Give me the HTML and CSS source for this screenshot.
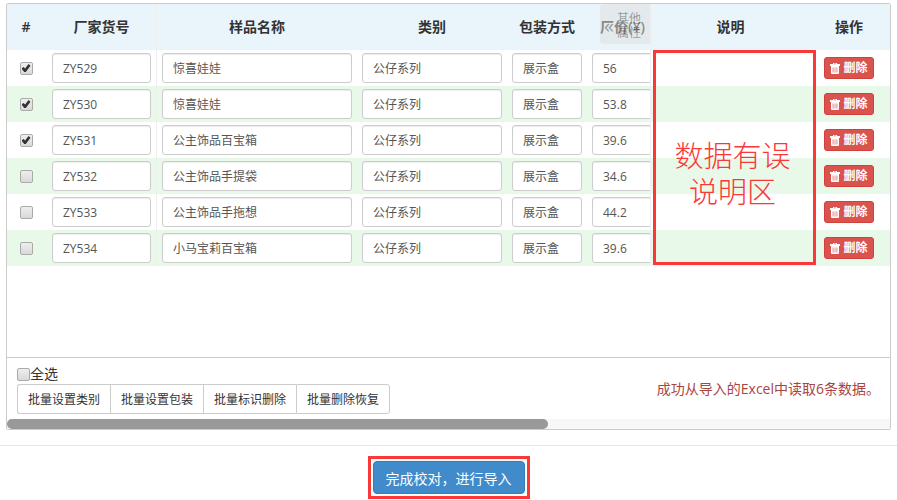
FILE: index.html
```html
<!DOCTYPE html>
<html lang="zh-CN">
<head>
  <meta charset="UTF-8" />
  <meta name="viewport" content="width=device-width, initial-scale=1.0"/>
  <title>数据导入校对</title>
  <link rel="stylesheet" href="styles.css">
</head>
<body>
  <svg class="symbols" width="0" height="0" aria-hidden="true">
    <symbol id="trash" viewBox="0 0 10 11">
      <path fill="#fff" fill-rule="evenodd" d="M3 0h4v1h3v2H0V1h3zM4 .6v.6h2V.6zM1 3h8v7a1 1 0 0 1-1 1H2a1 1 0 0 1-1-1zM2.7 4.4v5.2h.7V4.4zM4.7 4.4v5.2h.6V4.4zM6.6 4.4v5.2h.7V4.4z"/>
    </symbol>
  </svg>

  <div class="panel">
    <div class="grid-body">
      <table class="grid">
        <colgroup>
          <col class="col-check"><col class="col-code"><col class="col-name"><col class="col-type">
          <col class="col-pack"><col class="col-price"><col class="col-note"><col class="col-action">
        </colgroup>
        <thead>
          <tr>
            <th class="check">#</th>
            <th class="frozen">厂家货号</th>
            <th>样品名称</th>
            <th>类别</th>
            <th>包装方式</th>
            <th class="price">厂价(¥)<button class="more" type="button"><span class="arrow">«</span><span>其他<br>属性</span></button></th>
            <th class="note">说明</th>
            <th class="action">操作</th>
          </tr>
        </thead>
        <tbody>
          <tr>
            <td class="check"><input type="checkbox" aria-label="选择 ZY529" checked></td>
            <td class="frozen"><input class="field" aria-label="厂家货号" value="ZY529"></td>
            <td><input class="field" aria-label="样品名称" value="惊喜娃娃"></td>
            <td><input class="field" aria-label="类别" value="公仔系列"></td>
            <td><input class="field" aria-label="包装方式" value="展示盒"></td>
            <td class="price"><input class="field" aria-label="厂价" value="56"></td>
            <td class="note"></td>
            <td class="action"><button class="btn-delete" type="button"><svg class="icon"><use href="#trash"/></svg>删除</button></td>
          </tr>
          <tr>
            <td class="check"><input type="checkbox" aria-label="选择 ZY530" checked></td>
            <td class="frozen"><input class="field" aria-label="厂家货号" value="ZY530"></td>
            <td><input class="field" aria-label="样品名称" value="惊喜娃娃"></td>
            <td><input class="field" aria-label="类别" value="公仔系列"></td>
            <td><input class="field" aria-label="包装方式" value="展示盒"></td>
            <td class="price"><input class="field" aria-label="厂价" value="53.8"></td>
            <td class="note"></td>
            <td class="action"><button class="btn-delete" type="button"><svg class="icon"><use href="#trash"/></svg>删除</button></td>
          </tr>
          <tr>
            <td class="check"><input type="checkbox" aria-label="选择 ZY531" checked></td>
            <td class="frozen"><input class="field" aria-label="厂家货号" value="ZY531"></td>
            <td><input class="field" aria-label="样品名称" value="公主饰品百宝箱"></td>
            <td><input class="field" aria-label="类别" value="公仔系列"></td>
            <td><input class="field" aria-label="包装方式" value="展示盒"></td>
            <td class="price"><input class="field" aria-label="厂价" value="39.6"></td>
            <td class="note"></td>
            <td class="action"><button class="btn-delete" type="button"><svg class="icon"><use href="#trash"/></svg>删除</button></td>
          </tr>
          <tr>
            <td class="check"><input type="checkbox" aria-label="选择 ZY532"></td>
            <td class="frozen"><input class="field" aria-label="厂家货号" value="ZY532"></td>
            <td><input class="field" aria-label="样品名称" value="公主饰品手提袋"></td>
            <td><input class="field" aria-label="类别" value="公仔系列"></td>
            <td><input class="field" aria-label="包装方式" value="展示盒"></td>
            <td class="price"><input class="field" aria-label="厂价" value="34.6"></td>
            <td class="note"></td>
            <td class="action"><button class="btn-delete" type="button"><svg class="icon"><use href="#trash"/></svg>删除</button></td>
          </tr>
          <tr>
            <td class="check"><input type="checkbox" aria-label="选择 ZY533"></td>
            <td class="frozen"><input class="field" aria-label="厂家货号" value="ZY533"></td>
            <td><input class="field" aria-label="样品名称" value="公主饰品手拖想"></td>
            <td><input class="field" aria-label="类别" value="公仔系列"></td>
            <td><input class="field" aria-label="包装方式" value="展示盒"></td>
            <td class="price"><input class="field" aria-label="厂价" value="44.2"></td>
            <td class="note"></td>
            <td class="action"><button class="btn-delete" type="button"><svg class="icon"><use href="#trash"/></svg>删除</button></td>
          </tr>
          <tr>
            <td class="check"><input type="checkbox" aria-label="选择 ZY534"></td>
            <td class="frozen"><input class="field" aria-label="厂家货号" value="ZY534"></td>
            <td><input class="field" aria-label="样品名称" value="小马宝莉百宝箱"></td>
            <td><input class="field" aria-label="类别" value="公仔系列"></td>
            <td><input class="field" aria-label="包装方式" value="展示盒"></td>
            <td class="price"><input class="field" aria-label="厂价" value="39.6"></td>
            <td class="note"></td>
            <td class="action"><button class="btn-delete" type="button"><svg class="icon"><use href="#trash"/></svg>删除</button></td>
          </tr>
        </tbody>
      </table>
      <!-- Marked area over the note column -->
      <div class="callout">数据有误<br>说明区</div>
    </div>

    <div class="grid-footer">
      <div>
        <label class="select-all"><input type="checkbox">全选</label>
        <div class="btn-group">
          <button type="button">批量设置类别</button>
          <button type="button">批量设置包装</button>
          <button type="button">批量标识删除</button>
          <button type="button">批量删除恢复</button>
        </div>
      </div>
      <p class="message">成功从导入的Excel中读取6条数据。</p>
    </div>
    <div class="scrollbar"><div class="thumb"></div></div>
  </div>

  <div class="submit-bar">
    <div class="highlight"><button class="btn-primary" type="button">完成校对，进行导入</button></div>
  </div>
</body>
</html>
```
FILE: styles.css
```css
* {
  box-sizing: border-box;
}

body {
  margin: 0;
  background: #fff;
  color: #333;
  font-family: "Open Sans", "Noto Sans CJK SC", sans-serif;
  font-size: 14px;
  line-height: 20px;
}

button, input {
  font-family: inherit;
}

button {
  cursor: pointer;
}

.symbols {
  position: absolute;
}

.panel {
  margin: 3px 6px 15px;
  border: 1px solid #ccc;
  border-radius: 2px;
}

/* Table */
.grid-body {
  position: relative;
  min-height: 353px;
}

.grid {
  width: 100%;
  table-layout: fixed;
  border-collapse: separate;
  border-spacing: 0;
}

.col-check  { width: 40px; }
.col-code   { width: 110px; }
.col-type   { width: 150px; }
.col-pack   { width: 80px; }
.col-price  { width: 63px; }
.col-note   { width: 160px; }
.col-action { width: 80px; }

.grid th {
  height: 46px;
  padding: 0;
  background: #eaf5fb;
  font-weight: 600;
  text-align: center;
  white-space: nowrap;
}

.grid td {
  height: 36px;
  padding: 0 5px;
}

.grid tbody tr:nth-child(even) {
  background: #e9f9e9;
}

.grid .frozen {
  border-right: 1px solid #eee;
}

.grid .note {
  border-left: 1px solid #eee;
}

.grid .price {
  position: relative;
  overflow: hidden;
}

.grid th.price {
  padding-left: 8px;
}

.grid .check,
.grid .action {
  padding: 0 2px 0 0;
  text-align: center;
}

.price .field {
  width: 70px;
}

.field {
  display: block;
  width: 100%;
  height: 30px;
  padding: 0 10px;
  border: 1px solid #ccc;
  border-radius: 3px;
  background: #fff;
  box-shadow: inset 0 1px 1px rgba(0,0,0,0.075);
  color: #555;
  font-size: 12px;
}

input[type="checkbox"] {
  appearance: none;
  position: relative;
  width: 13px;
  height: 13px;
  margin: 0;
  border: 1px solid #aaa;
  border-radius: 2px;
  background: linear-gradient(#eee, #d9d9d9);
}

.check input[type="checkbox"] {
  display: block;
  margin: 0 auto;
}

input[type="checkbox"]:checked::after {
  content: "";
  position: absolute;
  inset: 1px;
  background: #333;
  clip-path: polygon(0 55%, 22% 38%, 40% 55%, 78% 5%, 100% 25%, 48% 95%, 30% 95%);
}

.more {
  position: absolute;
  top: 0;
  right: 0;
  display: flex;
  align-items: center;
  gap: 3px;
  width: 50px;
  height: 40px;
  padding: 3px 4px 0;
  border: 0;
  border-radius: 4px 0 0 4px;
  background: rgba(221,221,221,0.5);
  color: rgba(51,51,51,0.45);
  font-size: 12px;
  line-height: 14px;
}

.more .arrow {
  font-size: 20px;
}

.btn-delete {
  display: inline-flex;
  align-items: center;
  gap: 3px;
  height: 22px;
  padding: 0 5px;
  border: 1px solid #d43f3a;
  border-radius: 3px;
  background: #d9534f;
  color: #fff;
  font-size: 12px;
  font-weight: 600;
  line-height: 18px;
  vertical-align: middle;
}

.icon {
  width: 10px;
  height: 11px;
}

.callout {
  position: absolute;
  top: 46px;
  right: 74px;
  display: flex;
  align-items: center;
  justify-content: center;
  width: 163px;
  height: 215px;
  padding: 32px 4px 0 0;
  border: 3px solid #fb3838;
  color: #fb3838;
  font-size: 29px;
  font-weight: 300;
  line-height: 36px;
  text-align: center;
}

/* Footer */
.grid-footer {
  display: flex;
  align-items: center;
  justify-content: space-between;
  padding: 6px 10px 5px;
  border-top: 1px solid #ccc;
}

.select-all {
  display: flex;
  align-items: center;
}

.btn-group {
  display: flex;
}

.btn-group button {
  height: 30px;
  padding: 0 10px;
  border: 1px solid #ccc;
  border-right: 0;
  background: #fff;
  color: #333;
  font-size: 12px;
}

.btn-group button:first-child {
  border-radius: 3px 0 0 3px;
}

.btn-group button:last-child {
  border-right: 1px solid #ccc;
  border-radius: 0 3px 3px 0;
}

.message {
  margin: 0;
  color: #a94442;
}

.scrollbar {
  height: 10px;
  background: #f7f7f7;
}

.thumb {
  width: 61.3%;
  height: 10px;
  border-radius: 5px;
  background: #999;
}

.submit-bar {
  display: flex;
  justify-content: center;
  padding-top: 10px;
  border-top: 1px solid #e5e5e5;
}

.highlight {
  padding: 2px;
  border: 3px solid #fb3838;
}

.btn-primary {
  display: block;
  height: 33px;
  padding: 0 12px;
  border: 1px solid #357ebd;
  border-radius: 4px;
  background: #428bca;
  color: #fff;
  font-size: 14px;
}
```
